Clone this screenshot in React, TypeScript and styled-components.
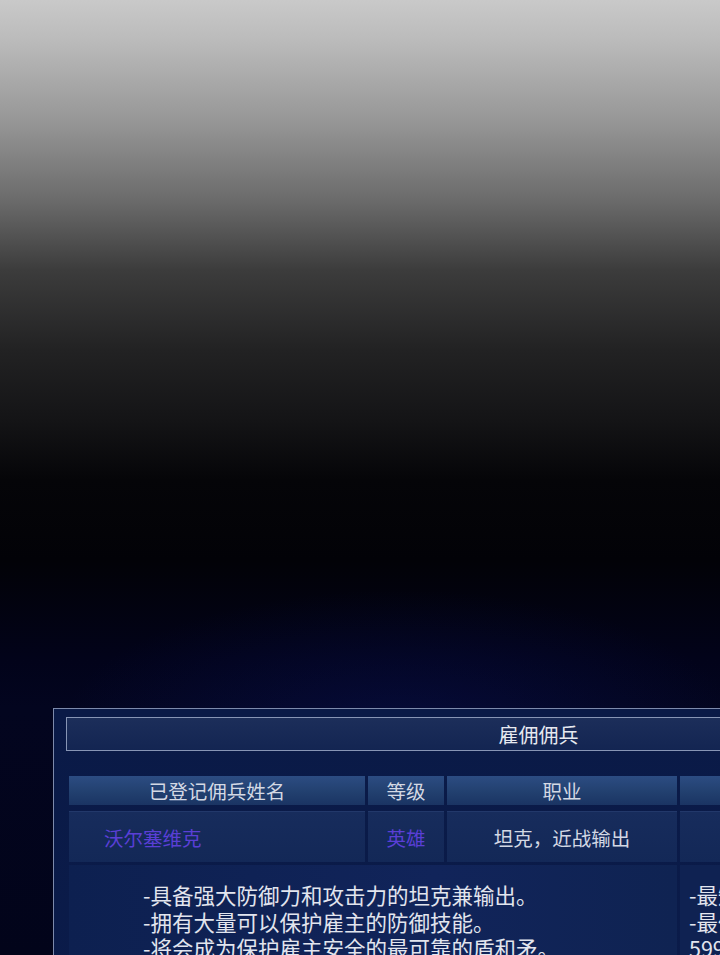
import React from 'react'
import styled, { createGlobalStyle } from 'styled-components'

const GlobalStyle = createGlobalStyle`
  html, body {
    margin: 0;
    padding: 0;
    background: #000;
    overflow: hidden;
  }
  body {
    font-family: "Noto Sans CJK SC", "Noto Sans", sans-serif;
  }
`

const columns = [
  { key: 'name', label: '已登记佣兵姓名' },
  { key: 'grade', label: '等级' },
  { key: 'job', label: '职业' },
  { key: 'extra', label: '' },
]

const traits = [
  '-具备强大防御力和攻击力的坦克兼输出。',
  '-拥有大量可以保护雇主的防御技能。',
  '-将会成为保护雇主安全的最可靠的盾和矛。',
]

const terms = ['-最短雇佣期限：', '-最低雇佣金额：', '599,000金币']

const App = () => {
  return (
    <Page>
      <GlobalStyle />
      <Panel>
        <TitleBar>雇佣佣兵</TitleBar>
        <Table>
          {columns.map((c) => (
            <HeadCell key={c.key}>{c.label}</HeadCell>
          ))}
          <DataCell align="left">
            <RankText>沃尔塞维克</RankText>
          </DataCell>
          <DataCell>
            <RankText>英雄</RankText>
          </DataCell>
          <DataCell>坦克，近战输出</DataCell>
          <DataCell />
          <DescCell>
            {traits.map((t) => (
              <Line key={t}>{t}</Line>
            ))}
          </DescCell>
          <TermsCell>
            {terms.map((t) => (
              <Line key={t}>{t}</Line>
            ))}
          </TermsCell>
        </Table>
      </Panel>
    </Page>
  )
}

export default App

const Page = styled.div`
  width: 720px;
  height: 955px;
  overflow: hidden;
  padding-top: 708px;
  padding-left: 53px;
  box-sizing: border-box;
  background:
    radial-gradient(ellipse 340px 140px at 400px 730px, rgba(10, 20, 95, 0.4), rgba(6, 10, 60, 0) 100%),
    linear-gradient(
      to bottom,
      #c9c9c9 0px,
      #bbbbbb 40px,
      #979797 120px,
      #6b6b6b 200px,
      #3c3c3c 270px,
      #222223 350px,
      #141416 420px,
      #050508 480px,
      #020207 560px,
      #02031a 660px,
      #03051f 708px,
      #02041a 955px
    );
`

const Panel = styled.div`
  width: 970px;
  height: 400px;
  border: 1px solid #7d8aab;
  border-right: none;
  background: linear-gradient(to bottom, #0a1a47 0%, #0b1c4b 100%);
  padding: 8px 12px 0 12px;
  box-sizing: border-box;
`

const TitleBar = styled.div`
  height: 34px;
  border: 1px solid #8795b5;
  box-sizing: border-box;
  background: linear-gradient(to bottom, #1c2e5a 0%, #132552 100%);
  color: #e6e9f0;
  font-size: 20px;
  display: flex;
  align-items: center;
  justify-content: center;
  margin-bottom: 25px;
`

const Table = styled.div`
  display: grid;
  grid-template-columns: 296px 76px 230px 1fr;
  grid-template-rows: 32px 51px auto;
  column-gap: 3px;
  row-gap: 3px;
  margin-left: 3px;
`

const HeadCell = styled.div`
  background: linear-gradient(to bottom, #2c4c82 0%, #22406f 55%, #1a3463 100%);
  color: #d4d9e4;
  font-size: 19.5px;
  display: flex;
  align-items: center;
  justify-content: center;
  margin-bottom: 3px;
`

const DataCell = styled.div<{ align?: 'left' | 'center' }>`
  background: linear-gradient(to bottom, #172c5c 0%, #132857 100%);
  border-top: 1px solid #22386a;
  box-sizing: border-box;
  color: #d3d8e4;
  font-size: 19.5px;
  display: flex;
  align-items: center;
  justify-content: ${({ align }) => (align === 'left' ? 'flex-start' : 'center')};
  padding-left: ${({ align }) => (align === 'left' ? '35px' : '0')};
`

const RankText = styled.span`
  color: #5a3fd6;
  font-size: 19.5px;
`

const DescCell = styled.div`
  grid-column: 1 / span 3;
  background: linear-gradient(to right, #0d2050 0%, #11245a 60%, #0f2352 100%);
  padding: 17px 0 0 74px;
  height: 120px;
`

const TermsCell = styled.div`
  background: #0f2252;
  padding: 17px 0 0 9px;
  height: 120px;
`

const Line = styled.div`
  color: #e2e5ee;
  font-size: 21.5px;
  line-height: 26.5px;
  white-space: nowrap;
`
